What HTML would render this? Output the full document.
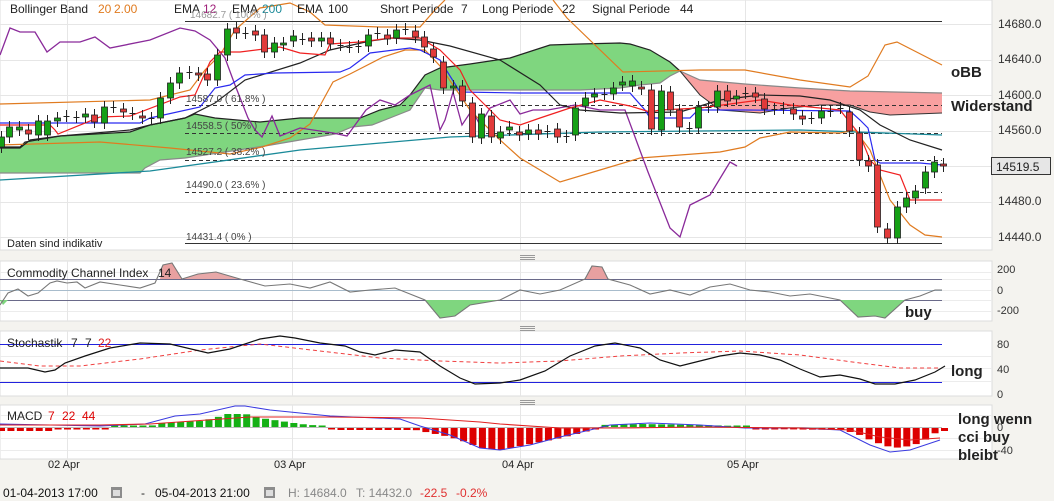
<!DOCTYPE html>
<html><head><meta charset="utf-8"><style>
html,body{margin:0;padding:0;background:#f4f3ef;width:1054px;height:501px;overflow:hidden;font-family:"Liberation Sans",Arial,sans-serif;}
svg{position:absolute;left:0;top:0}
</style></head><body>
<svg id="s" width="1054" height="501" xmlns="http://www.w3.org/2000/svg" font-family="Liberation Sans, Arial, sans-serif">
<rect x="0" y="0" width="1054" height="501" fill="#f4f3ef"/>
<rect x="0" y="0" width="992" height="250" fill="#fff" stroke="#dcdcdc"/>
<rect x="0" y="261" width="992" height="60" fill="#fff" stroke="#dcdcdc"/>
<rect x="0" y="331" width="992" height="65" fill="#fff" stroke="#dcdcdc"/>
<rect x="0" y="405" width="992" height="54" fill="#fff" stroke="#dcdcdc"/>
</svg>
<script>
var S=document.getElementById('s'),NS='http://www.w3.org/2000/svg';
function el(t,a,txt){var e=document.createElementNS(NS,t);for(var k in a)e.setAttribute(k,a[k]);if(txt!=null)e.textContent=txt;S.appendChild(e);return e;}
function pl(pts,c,w,extra){var a={points:pts.map(function(p){return p.join(',')}).join(' '),fill:'none',stroke:c,'stroke-width':w||1};for(var k in extra)a[k]=extra[k];return el('polyline',a);}
function pg(top,bot,fill){var p=top.concat(bot.slice().reverse());return el('polygon',{points:p.map(function(q){return q.join(',')}).join(' '),fill:fill,stroke:'none'});}
function interp(pts,x){for(var i=0;i<pts.length-1;i++){if(x>=pts[i][0]&&x<=pts[i+1][0]){var t=(x-pts[i][0])/(pts[i+1][0]-pts[i][0]);return pts[i][1]+t*(pts[i+1][1]-pts[i][1]);}}return pts[pts.length-1][1];}
[24,60,95,131,166,202,237].forEach(function(y){el('line',{x1:0,x2:992,y1:y+.5,y2:y+.5,stroke:'#e6e6e6'})});
[272,279,290,300,311].forEach(function(y){el('line',{x1:0,x2:992,y1:y+.5,y2:y+.5,stroke:'#ececec'})});
[356,368,381].forEach(function(y){el('line',{x1:0,x2:992,y1:y+.5,y2:y+.5,stroke:'#ececec'})});
[415,438,450].forEach(function(y){el('line',{x1:0,x2:992,y1:y+.5,y2:y+.5,stroke:'#ececec'})});
[67,292,520,745].forEach(function(x){[[0,250],[261,321],[331,396],[405,459]].forEach(function(r){el('line',{x1:x+.5,x2:x+.5,y1:r[0],y2:r[1],stroke:'#e6e6e6'})})});
var gTop=[[0,147],[20,147],[25,142],[60,136],[130,132],[150,125],[185,118],[195,114],[215,118],[260,122],[300,118],[360,118],[380,110],[400,105],[410,95],[425,75],[440,68],[470,64],[510,58],[550,45],[580,44],[620,43],[630,44],[650,50],[670,62],[680,71]];
var gBot=[[0,173],[140,173],[145,168],[160,160],[185,158],[225,152],[265,146],[300,140],[335,134],[352,127],[372,125],[400,114],[410,110],[425,88],[440,90],[500,90],[580,90],[620,88],[640,85],[660,83],[670,76],[680,71]];
pg(gTop,gBot,'#7fd67f');pl(gTop,'#222',1.2);pl(gBot,'#8a8a8a',1.2);
var rTop=[[680,71],[700,80],[745,84],[800,88],[850,91],[942,93]];
var rBot=[[680,71],[700,95],[720,110],[760,113],[790,108],[820,105],[850,105],[870,112],[890,115],[942,113]];
pg(rTop,rBot,'#f8a0a0');pl(rTop,'#888',1.2);pl(rBot,'#333',1);
el('line',{x1:185,x2:942,y1:21.5,y2:21.5,stroke:'#333'});
el('line',{x1:185,x2:942,y1:243.5,y2:243.5,stroke:'#333'});
[105,133,160,192].forEach(function(y){el('line',{x1:185,x2:942,y1:y+.5,y2:y+.5,stroke:'#333','stroke-dasharray':'4,3'})});
pl([[0,180],[150,171],[300,150],[450,137],[600,132],[800,130],[942,135]],'#1a8a99',1.3);
pl([[0,104],[150,100],[190,90],[205,70],[220,55],[235,30],[260,8],[290,3],[310,12],[325,25],[380,27],[420,27],[435,10],[445,0]],'#e07b20',1.2);
pl([[553,0],[567,18],[623,72],[700,70],[745,70],[800,80],[850,87],[868,76],[885,45],[897,42],[942,65]],'#e07b20',1.2);
pl([[0,145],[100,142],[170,148],[230,154],[262,147],[290,138],[310,124],[333,82],[350,74],[383,57],[405,50],[425,50],[440,66],[470,110],[500,140],[520,158],[560,182],[600,170],[640,158],[680,155],[720,152],[745,147],[760,138],[790,132],[840,133],[855,130],[870,150],[890,200],[910,225],[925,235],[942,237]],'#e07b20',1.2);
pl([[0,55],[10,28],[20,32],[35,32],[47,52],[60,42],[80,42],[95,37],[110,48],[150,40],[180,28],[195,31],[210,40],[225,58],[235,85],[248,118],[255,130],[262,137],[272,116],[280,136],[300,128],[333,133],[347,136],[366,110],[380,100],[395,105],[410,95],[430,85],[440,130],[445,120],[453,92],[462,125],[472,110],[480,125],[490,108],[510,100],[520,114],[533,110],[548,110],[575,105],[600,110],[625,110],[648,172],[670,228],[680,237],[690,205],[710,195],[730,162],[737,166]],'#8a2a9a',1.3);
pl([[0,148],[20,148],[30,140],[60,136],[130,130],[150,125],[185,118],[215,103],[245,80],[300,63],[330,50],[370,41],[392,38],[420,40],[450,46],[500,60],[540,85],[560,105],[580,110],[620,113],[680,112],[720,100],[760,95],[800,96],[830,100],[860,110],[880,125],[910,140],[942,150]],'#222',1.2);
pl([[0,123],[140,123],[150,118],[200,107],[215,88],[230,85],[245,75],[275,73],[340,72],[350,68],[370,53],[410,48],[420,50],[440,60],[460,92],[520,93],[630,93],[645,110],[650,118],[690,118],[698,110],[745,110],[850,111],[860,120],[868,128],[875,160],[880,163],[920,163],[942,165]],'#2a2af0',1.2);
pl([[0,125],[50,125],[55,130],[58,134],[100,117],[130,116],[180,97],[195,95],[210,62],[220,52],[240,52],[280,47],[300,53],[325,55],[330,44],[360,42],[390,38],[420,38],[440,50],[460,70],[470,90],[480,100],[500,120],[520,125],[540,118],[570,108],[600,100],[630,106],[650,112],[660,110],[700,108],[760,100],[790,105],[840,110],[860,135],[870,160],[880,170],[900,175],[910,200],[925,200],[942,200]],'#f02020',1.2);
var C=[[1,147,137],[9,137,127],[19,130,127],[28,130,134],[38,135,121],[47,135,121],[57,121,118],[66,116,116],[76,117,117],[85,117,114],[94,115,122],[104,123,107],[113,107,107],[123,109,112],[132,113,114],[142,116,118],[151,118,118],[160,118,98],[170,98,83],[179,83,73],[189,72,73],[198,73,75],[207,74,80],[217,80,55],[227,55,29],[236,28,33],[245,33,33],[255,31,35],[264,35,52],[274,52,43],[283,45,43],[293,41,36],[302,39,39],[311,38,41],[321,41,38],[330,38,44],[340,45,45],[349,47,47],[358,47,46],[368,46,35],[377,33,33],[387,35,39],[396,38,30],[405,29,29],[415,31,37],[424,37,47],[433,49,57],[443,62,88],[453,88,86],[462,86,101],[472,103,137],[481,138,114],[491,116,137],[500,138,132],[509,130,127],[519,132,135],[528,134,130],[538,130,134],[547,132,131],[557,129,137],[566,136,137],[575,135,108],[585,106,98],[594,97,94],[604,94,94],[613,94,88],[622,85,82],[632,86,81],[641,87,89],[651,90,129],[661,130,91],[670,92,110],[679,110,127],[689,128,128],[698,128,107],[708,107,107],[717,107,91],[727,91,101],[736,99,96],[745,93,93],[755,93,97],[764,99,109],[774,109,109],[783,108,108],[793,109,114],[802,116,119],[811,118,118],[821,118,111],[830,111,111],[840,108,108],[849,112,131],[859,133,160],[868,161,166],[877,165,227],[887,229,238],[897,238,207],[906,207,198],[915,198,191],[925,188,172],[934,172,162],[943,164,166]];
C.forEach(function(c){var x=c[0],o=c[1],cl=c[2],top=Math.min(o,cl),bot=Math.max(o,cl);
 el('line',{x1:x+.5,x2:x+.5,y1:top-6,y2:bot+6,stroke:'#222'});
 if(bot-top<1.5){el('line',{x1:x-2.5,x2:x+3.5,y1:top+.5,y2:top+.5,stroke:'#222'});}
 else el('rect',{x:x-2.5,y:top,width:6,height:bot-top,fill:cl<o?'#15a015':'#e23a3a',stroke:'#222','stroke-width':.8});});
el('rect',{x:991.5,y:157.5,width:59,height:17,fill:'#e6e6e6',stroke:'#333'});
el('line',{x1:0,x2:942,y1:279.5,y2:279.5,stroke:'#6a6a8a'});
el('line',{x1:0,x2:942,y1:290.5,y2:290.5,stroke:'#a8bccc'});
el('line',{x1:0,x2:942,y1:300.5,y2:300.5,stroke:'#6a6a8a'});
pg([[160,279],[163,265],[172,263],[182,279]],[[182,279],[160,279]],'#e8a0a0');
pg([[182,279],[198,274],[216,272],[240,279]],[[240,279],[182,279]],'#e8a8a8');
pg([[585,279],[592,266],[602,267],[608,279]],[[608,279],[585,279]],'#e8a0a0');
pg([[0,300],[3,305],[8,300]],[[8,300],[0,300]],'#7fd67f');
pg([[425,300],[440,318],[455,316],[470,305],[500,300]],[[500,300],[425,300]],'#7fd67f');
pg([[840,300],[858,317],[875,316],[885,318],[905,300]],[[905,300],[840,300]],'#7fd67f');
pl([[0,305],[8,293],[18,289],[28,296],[38,293],[50,283],[57,281],[67,283],[77,282],[85,288],[100,282],[120,285],[140,288],[155,283],[163,265],[172,263],[182,279],[198,274],[216,272],[240,279],[265,286],[290,284],[310,288],[330,282],[350,292],[370,290],[395,288],[410,294],[425,300],[440,318],[455,316],[470,305],[500,300],[520,290],[540,294],[560,290],[585,279],[592,266],[602,267],[608,279],[630,285],[650,294],[670,290],[690,295],[710,287],[730,284],[750,290],[770,292],[790,296],[810,294],[840,300],[858,317],[875,316],[885,318],[905,300],[920,296],[935,290],[942,290]],'#777',1.1);
el('line',{x1:0,x2:942,y1:344.5,y2:344.5,stroke:'#2222dd'});
el('line',{x1:0,x2:942,y1:382.5,y2:382.5,stroke:'#2222dd'});
pl([[0,361],[40,366],[80,366],[140,359],[200,350],[260,344],[320,351],[380,358],[440,361],[500,363],[560,361],[620,356],[680,353],[740,351],[800,355],[860,363],[900,368],[942,368]],'#f04040',1,{'stroke-dasharray':'4,3'});
pl([[0,368],[28,368],[45,372],[55,370],[65,363],[85,356],[110,348],[140,343],[170,344],[208,353],[230,349],[260,339],[280,336],[295,338],[320,343],[345,346],[360,352],[375,355],[395,350],[420,352],[440,366],[460,378],[475,384],[500,383],[520,380],[545,371],[570,356],[595,346],[615,343],[640,348],[660,360],[680,366],[700,361],[720,356],[740,353],[760,355],[780,360],[800,369],[820,377],[840,375],[860,379],[875,384],[895,384],[915,380],[935,372],[945,366]],'#111',1.2);
el('line',{x1:0,x2:942,y1:427.5,y2:427.5,stroke:'#bbb'});
var HP=[[0,-3],[50,-3],[60,-1],[150,1],[160,4],[200,6],[215,9],[225,13],[245,13],[260,9],[300,3],[322,1],[330,0],[337,-2],[415,-2],[430,-5],[445,-8],[460,-12],[470,-16],[480,-20],[500,-22],[520,-18],[560,-10],[580,-5],[595,-1],[600,2],[640,3],[700,2],[740,1],[760,-1],[840,-2],[855,-5],[870,-12],[885,-18],[900,-20],[920,-15],[935,-5],[943,-3]];
for(var i=0;i<101;i++){var x=i*9.43+1,v=interp(HP,x);if(Math.abs(v)<1.2)v=v<0?-1.5:1.5;
 el('rect',{x:x-3,y:v>0?427-v:428,width:7,height:Math.abs(v),fill:v>0?'#15b015':'#dd0000'});}
pl([[0,424],[100,426],[145,424],[175,416],[200,414],[235,406],[245,406],[270,410],[330,416],[400,419],[420,426],[450,435],[480,448],[500,450],[530,445],[560,437],[590,430],[610,425],[650,423],[700,425],[745,428],[800,428],[840,430],[870,445],[890,452],[910,450],[940,440]],'#3a3ae0',1);
pl([[0,425],[100,425],[150,424],[250,417],[330,417],[420,418],[480,422],[500,424],[560,428],[620,428],[700,427],[800,428],[850,430],[880,437],[910,440],[940,438]],'#e02020',1.1);
[255,326,400].forEach(function(y){for(var k=0;k<3;k++)el('line',{x1:520,x2:535,y1:y+k*2+.5,y2:y+k*2+.5,stroke:'#999'});});
function T(x,y,s,a){var o={x:x,y:y,'font-size':a&&a.fs||12,fill:a&&a.c||'#222'};if(a&&a.b)o['font-weight']='bold';return el('text',o,s);}
var O='#e07b20';
T(10,13,'Bollinger Band');T(98,13,'20',{c:O});T(114,13,'2.00',{c:O});
T(174,13,'EMA');T(203,13,'12',{c:'#a0207a'});T(232,13,'EMA');T(262,13,'200',{c:'#1a8a99'});T(297,13,'EMA');T(328,13,'100');
T(380,13,'Short Periode');T(461,13,'7');T(482,13,'Long Periode');T(562,13,'22');T(592,13,'Signal Periode');T(680,13,'44');
T(190,18,'14682.7 ( 100% )',{fs:10,c:'#999'});
T(186,102,'14587.0 ( 61.8% )',{fs:10,c:'#444'});
T(186,129,'14558.5 ( 50% )',{fs:10,c:'#444'});
T(186,155,'14527.2 ( 38.2% )',{fs:10,c:'#444'});
T(186,188,'14490.0 ( 23.6% )',{fs:10,c:'#444'});
T(186,240,'14431.4 ( 0% )',{fs:10,c:'#444'});
T(7,247,'Daten sind indikativ',{fs:11});
[['14680.0',28],['14640.0',63],['14600.0',99],['14560.0',134],['14480.0',205],['14440.0',241]].forEach(function(a){T(998,a[1],a[0],{fs:12,c:'#333'})});
T(996,171,'14519.5',{fs:12,c:'#222'});
T(951,77,'oBB',{fs:15,b:1});
T(951,111,'Widerstand',{fs:15,b:1});
T(7,277,'Commodity Channel Index');T(158,277,'14');
T(7,347,'Stochastik');T(71,347,'7');T(85,347,'7');T(98,347,'22',{c:'#e02020'});
T(7,420,'MACD');T(48,420,'7',{c:'#dd0000'});T(62,420,'22',{c:'#dd0000'});T(82,420,'44',{c:'#dd0000'});
[['200',273],['0',294],['-200',314]].forEach(function(a){T(997,a[1],a[0],{fs:11,c:'#333'})});
[['80',348],['40',373],['0',398]].forEach(function(a){T(997,a[1],a[0],{fs:11,c:'#333'})});
[['0',431],['-40',454]].forEach(function(a){T(997,a[1],a[0],{fs:11,c:'#333'})});
T(905,317,'buy',{fs:15,b:1});
T(951,376,'long',{fs:15,b:1});
T(958,424,'long wenn',{fs:15,b:1});
T(958,442,'cci buy',{fs:15,b:1});
T(958,460,'bleibt',{fs:15,b:1});
[['02 Apr',48],['03 Apr',274],['04 Apr',502],['05 Apr',727]].forEach(function(a){T(a[1],468,a[0],{fs:11})});
T(3,497,'01-04-2013 17:00',{fs:12,c:'#111'});
el('rect',{x:111,y:487,width:11,height:11,fill:'#8c8c8c'});el('rect',{x:113,y:490,width:7,height:6,fill:'#ddd'});
T(141,497,'-',{fs:12});
T(155,497,'05-04-2013 21:00',{fs:12,c:'#111'});
el('rect',{x:264,y:487,width:11,height:11,fill:'#8c8c8c'});el('rect',{x:266,y:490,width:7,height:6,fill:'#ddd'});
T(288,497,'H: 14684.0',{fs:12,c:'#888'});T(356,497,'T: 14432.0',{fs:12,c:'#888'});
T(420,497,'-22.5',{fs:12,c:'#e03030'});T(456,497,'-0.2%',{fs:12,c:'#e03030'});
</script>
</body></html>
